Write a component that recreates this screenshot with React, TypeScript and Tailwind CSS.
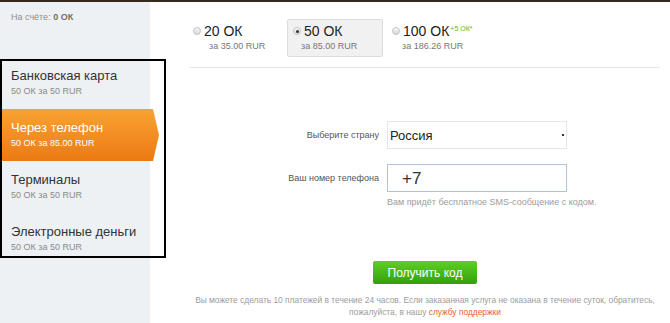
import React from "react";

function Radio({ checked }: { checked?: boolean }) {
  return (
    <span className="relative inline-flex h-[8px] w-[8px] shrink-0 items-center justify-center rounded-full border border-[#c4c4c4] bg-gradient-to-b from-[#f8f8f8] to-[#d8d8d8]">
      {checked ? <span className="h-[3px] w-[3px] rounded-full bg-[#333]" /> : null}
    </span>
  );
}

function SideItem({
  title,
  sub,
  active,
}: {
  title: string;
  sub: string;
  active?: boolean;
}) {
  if (active) {
    return (
      <div
        className="relative h-[52px] w-[159px] bg-gradient-to-b from-[#f9a232] to-[#ec7a12] pl-[11px] pt-[11px]"
        style={{ clipPath: "polygon(0 0, 153px 0, 159px 50%, 153px 100%, 0 100%)" }}
      >
        <div className="text-[13px] leading-[15px] text-white">{title}</div>
        <div className="mt-[3px] text-[9px] leading-[11px] text-white">{sub}</div>
      </div>
    );
  }
  return (
    <div className="h-[52px] pl-[11px] pt-[11px]">
      <div className="text-[13px] leading-[15px] text-[#333]">{title}</div>
      <div className="mt-[3px] text-[9px] leading-[11px] text-[#8a8a8a]">{sub}</div>
    </div>
  );
}

export default function App() {
  return (
    <div className="relative h-[323px] w-[670px] overflow-hidden bg-white font-['Liberation_Sans',Arial,sans-serif]">
      <div className="h-[2px] bg-[#36291d]" />
      <div className="flex h-[321px]">
        {/* Sidebar */}
        <div className="w-[150px] shrink-0 bg-[#edf1f4] pt-[10px]">
          <div className="pl-[11px] text-[9px] leading-[11px] text-[#8f8f8f]">
            На счёте: <span className="font-bold text-[#707070]">0 ОК</span>
          </div>
          <div className="mt-[34px]">
            <SideItem title="Банковская карта" sub="50 ОК за 50 RUR" />
            <SideItem title="Через телефон" sub="50 ОК за 85.00 RUR" active />
            <SideItem title="Терминалы" sub="50 ОК за 50 RUR" />
            <SideItem title="Электронные деньги" sub="50 ОК за 50 RUR" />
          </div>
        </div>

        {/* Main */}
        <div className="flex flex-1 flex-col pl-[40px] pr-[10px]">
          <div className="ml-[-3px] mt-[17px] flex gap-[4px]">
            <div className="h-[38px] w-[96px] rounded-[2px] border border-transparent pl-[5px] pt-[3px]">
              <div className="flex items-center gap-[3px]">
                <Radio />
                <span className="text-[14px] leading-[16px] text-[#222]">20 ОК</span>
              </div>
              <div className="ml-[16px] mt-[2px] text-[9px] leading-[11px] text-[#777]">за 35.00 RUR</div>
            </div>
            <div className="h-[38px] w-[96px] rounded-[2px] border border-[#dcdcdc] bg-[#f1f1f1] pl-[5px] pt-[3px]">
              <div className="flex items-center gap-[3px]">
                <Radio checked />
                <span className="text-[14px] leading-[16px] text-[#222]">50 ОК</span>
              </div>
              <div className="ml-[8px] mt-[2px] text-[9px] leading-[11px] text-[#777]">за 85.00 RUR</div>
            </div>
            <div className="h-[38px] w-[110px] rounded-[2px] border border-transparent pl-[4px] pt-[3px]">
              <div className="flex items-center gap-[3px]">
                <Radio />
                <span className="text-[14px] leading-[16px] text-[#222]">100 ОК</span>
                <span className="ml-[-2px] mt-[2px] self-start text-[7px] leading-[8px] text-[#5cb82a]">+5 ОК*</span>
              </div>
              <div className="ml-[10px] mt-[2px] text-[9px] leading-[11px] text-[#777]">за 186.26 RUR</div>
            </div>
          </div>

          <div className="mt-[10px] h-px bg-[#e6e6e6]" />

          <div className="mt-[53px] flex items-center">
            <div className="w-[189px] text-right text-[9px] leading-[11px] text-[#555]">Выберите страну</div>
            <div className="ml-[8px] flex h-[28px] w-[180px] items-center justify-between border border-[#e6e6e6] bg-white pl-[2px] pr-[2px]">
              <span className="text-[13px] leading-[15px] text-[#222]">Россия</span>
              <span className="h-[2px] w-[2px] bg-[#333]" />
            </div>
          </div>

          <div className="mt-[15px] flex items-center">
            <div className="w-[189px] text-right text-[9px] leading-[11px] text-[#555]">Ваш номер телефона</div>
            <div className="ml-[8px] flex h-[28px] w-[180px] items-center border border-[#aec3dc] bg-white pl-[14px]">
              <span className="text-[17px] leading-[19px] text-[#333]">+7</span>
            </div>
          </div>

          <div className="ml-[197px] mt-[5px] text-[9px] leading-[11px] text-[#9c9c9c]">
            Вам придёт бесплатное SMS-сообщение с кодом.
          </div>

          <div className="mx-auto mt-[53px] flex h-[23px] w-[104px] items-center justify-center rounded-[2px] bg-gradient-to-b from-[#5fcf25] to-[#33a00c] text-[12px] leading-[14px] text-white">
            Получить код
          </div>

          <div className="mt-[11px] flex flex-col items-center whitespace-nowrap text-[8.4px] leading-[11.5px] text-[#9c9c9c]">
            <div>
              Вы можете сделать 10 платежей в течение 24 часов. Если заказанная услуга не оказана в течение суток, обратитесь,
            </div>
            <div>
              пожалуйста, в нашу <span className="text-[#e8632a]">службу поддержки</span>
            </div>
          </div>
        </div>
      </div>

      {/* annotation frame */}
      <div className="pointer-events-none absolute left-0 top-[59px] h-[199px] w-[166px] border-2 border-black" />
    </div>
  );
}
